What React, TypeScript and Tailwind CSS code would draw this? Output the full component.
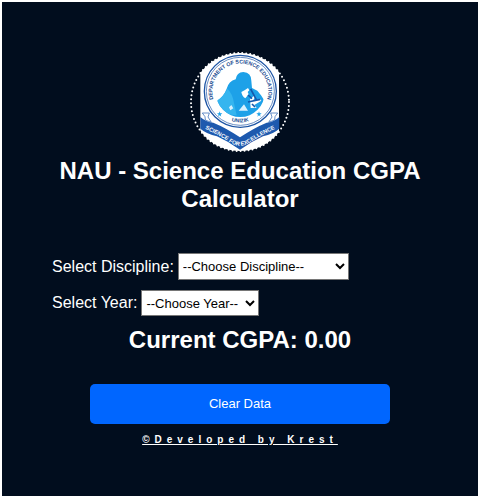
function Crest() {
  return (
    <svg viewBox="30 36 300 300" className="size-[100px]" role="img" aria-label="Department of Science Education crest">
      <defs>
        <clipPath id="round">
          <circle cx="180" cy="186" r="147" />
        </clipPath>
        <clipPath id="disc">
          <circle cx="181" cy="158" r="73" />
        </clipPath>
        <path id="topArc" d="M108 196 A84 84 0 1 1 254 196" />
        <path id="lowArc" d="M110 215 A94 94 0 0 0 252 215" />
        <path id="motto" d="M66 263 Q110 281 148 306 Q180 328 212 306 Q250 281 294 263" />
      </defs>
      <g clipPath="url(#round)">
        <rect x="61" y="36" width="236" height="300" fill="#fff" />
        <circle cx="181" cy="154" r="108" fill="#fff" stroke="#1e55a5" strokeWidth="4" />
        <circle cx="181" cy="154" r="102" fill="none" stroke="#1e55a5" strokeWidth="2" />
        <g clipPath="url(#disc)">
          <path d="M106 188 Q130 172 140 146 Q146 124 167 118 Q170 97 190 96 Q214 98 214 122 L216 144 L232 152 L243 166 L256 186 Q232 234 181 234 Q124 230 106 188Z" fill="#1da1e8" />
          <path d="M106 184 Q132 170 142 146 Q158 160 162 190 L170 226 Q124 226 106 184Z" fill="#35b5ef" />
          <path d="M184 156 Q196 150 204 144 L208 151 L203 156 L206 163 L196 175 Q186 169 184 156Z" fill="#fff" />
          <path d="M210 178 L222 167 L226 170 L218 184 L240 176 L244 182 L223 195 L230 203 L212 204Z" fill="#fff" />
          <path d="M176 212 L192 193 L204 212Z M147 202 L154 195 L160 205 L151 211Z" fill="#d7f1ff" />
          <path d="M212 147 L230 181 M204 186 L241 178 M216 192 L225 201 M204 165 L216 176" stroke="#1459ad" strokeWidth="5" />
        </g>
        <g fill="#174990" fontFamily="Liberation Sans Narrow, Liberation Sans, Arial, sans-serif" fontWeight="700">
          <text fontSize="16">
            <textPath href="#topArc" startOffset="50%" textAnchor="middle">DEPARTMENT OF SCIENCE EDUCATION</textPath>
          </text>
          <text fontSize="16">
            <textPath href="#lowArc" startOffset="50%" textAnchor="middle">UNIZIK</textPath>
          </text>
        </g>
        <path d="M119 214 l2 6 6 0 -5 4 2 6 -5 -4 -5 4 2 -6 -5 -4 6 0Z M237 214 l2 6 6 0 -5 4 2 6 -5 -4 -5 4 2 -6 -5 -4 6 0Z" fill="#1da1e8" />
        <path d="M61 231 Q79 247 100 248 Q139 264 180 292 Q221 264 260 248 Q281 247 298 231 L298 266 Q280 282 249 289 Q212 306 180 329 Q148 306 111 289 Q80 282 61 266Z" fill="#1d59ae" />
        <path d="M67 219 L88 219 L84 231 L94 247 L76 240 L75 230Z M293 219 L272 219 L276 231 L266 247 L284 240 L285 230Z" fill="#fff" stroke="#1d59ae" strokeWidth="2" />
        <text fill="#fff" fontSize="17" fontFamily="Liberation Sans Narrow, Liberation Sans, Arial, sans-serif" fontWeight="700">
          <textPath href="#motto" startOffset="50%" textAnchor="middle">SCIENCE FOR EXCELLENCE</textPath>
        </text>
      </g>
      <circle cx="180" cy="186" r="147" fill="none" stroke="#fff" strokeWidth="6" strokeLinecap="round" strokeDasharray="0 12.04" />
    </svg>
  );
}

const selectStyle = "rounded-none border border-[#767676] bg-white text-[13px] text-black";

export default function App() {
  return (
    <div className="bg-white pt-0.5 pr-1 pb-[3px] pl-0.5 font-['Liberation_Sans',Arial,sans-serif] text-white">
      <main className="bg-[#010d1e] px-[50px] pt-[50px] pb-12">
        <header className="flex flex-col items-center gap-[5px]">
          <Crest />
          <h1 className="text-center text-2xl leading-7 font-bold">NAU - Science Education CGPA Calculator</h1>
        </header>
        <form className="mt-10 flex flex-col gap-2.5">
          <div className="flex items-center gap-1">
            <label htmlFor="discipline">Select Discipline:</label>
            <select id="discipline" className={`${selectStyle} h-[27px] w-[171px]`}>
              <option>--Choose Discipline--</option>
            </select>
          </div>
          <div className="flex items-center gap-1">
            <label htmlFor="year">Select Year:</label>
            <select id="year" className={`${selectStyle} h-[26px] w-[118px]`}>
              <option>--Choose Year--</option>
            </select>
          </div>
        </form>
        <h2 className="mt-2.5 text-center text-2xl leading-7 font-bold">Current CGPA: 0.00</h2>
        <div className="mt-[30px] flex flex-col items-center gap-2">
          <button type="button" className="h-10 w-full max-w-[300px] rounded-[5px] bg-[#0066ff] text-[13px]">Clear Data</button>
          <a href="#krest" className="text-[10px] leading-4 font-bold tracking-[5px] underline">©Developed by Krest</a>
        </div>
      </main>
    </div>
  );
}
